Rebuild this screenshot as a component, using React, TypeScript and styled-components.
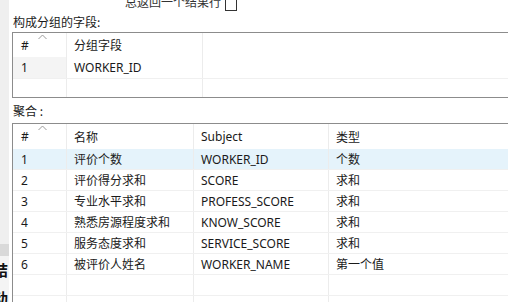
import React from "react";
import styled, { createGlobalStyle } from "styled-components";

const GlobalStyle = createGlobalStyle`
  html, body {
    margin: 0;
    padding: 0;
    background: #ffffff;
  }
  body {
    font-family: "Noto Sans", "Noto Sans CJK SC", sans-serif;
    font-size: 12px;
    color: #1a1a1a;
  }
`;

const Screen = styled.div`
  display: flex;
  width: 508px;
  height: 302px;
  overflow: hidden;
`;

const SideStrip = styled.div`
  width: 9px;
  flex-shrink: 0;
  background: #efefef;
  display: flex;
  flex-direction: column;
  overflow: hidden;
`;

const StripSpacer = styled.div`
  flex: 1;
`;

const StripBand = styled.div`
  height: 12px;
  flex-shrink: 0;
  background: #d9d9d9;
`;

const StripText = styled.div`
  height: 46px;
  flex-shrink: 0;
  background: #f4f4f4;
  font-family: "Noto Sans CJK SC", sans-serif;
  font-size: 15px;
  font-weight: bold;
  line-height: 28px;
  color: #111;
  margin-left: -7px;
  white-space: nowrap;
`;

const Main = styled.div`
  flex: 1;
  padding-left: 3px;
  display: flex;
  flex-direction: column;
  min-width: 0;
  overflow: hidden;
  & > * {
    flex-shrink: 0;
  }
`;

const TopOption = styled.div`
  height: 11px;
  overflow: hidden;
  padding-left: 113px;
  display: flex;
  align-items: flex-start;
  gap: 4px;
`;

const OptionText = styled.span`
  line-height: 12px;
  margin-top: -4px;
  font-family: "Noto Sans CJK SC", sans-serif;
  color: #333;
`;

const Check = styled.span`
  box-sizing: border-box;
  width: 12px;
  height: 12px;
  margin-top: -1px;
  flex-shrink: 0;
  border: 1px solid #333;
  background: #fff;
`;

const Label = styled.div<{ $h: number }>`
  height: ${(p) => p.$h}px;
  line-height: ${(p) => p.$h}px;
  padding-left: 1px;
  font-family: "Noto Sans CJK SC", sans-serif;
`;

const Table = styled.div`
  border-top: 1px solid #8c8c8c;
  border-bottom: 1px solid #8c8c8c;
  border-left: 1px solid #8c8c8c;
  display: flex;
  flex-direction: column;
  & > * {
    flex-shrink: 0;
  }
`;

const OpenTable = styled(Table)`
  border-bottom: none;
`;

const HeaderRow = styled.div<{ $h: number }>`
  display: flex;
  height: ${(p) => p.$h}px;
  position: relative;
`;

const Row = styled.div<{ $h: number; $selected?: boolean; $last?: boolean }>`
  display: flex;
  box-sizing: border-box;
  height: ${(p) => p.$h}px;
  border-bottom: ${(p) => (p.$last ? "none" : "1px solid #f0f0f0")};
  background: ${(p) => (p.$selected ? "#e5f3fb" : "transparent")};
`;

const Cell = styled.div<{ $w?: number; $shade?: boolean }>`
  ${(p) => (p.$w ? `width: ${p.$w}px; flex-shrink: 0;` : "flex: 1;")}
  box-sizing: border-box;
  border-right: ${(p) => (p.$w ? "1px solid #ececec" : "none")};
  padding-left: 7px;
  display: flex;
  align-items: center;
  white-space: nowrap;
  overflow: hidden;
  background: ${(p) => (p.$shade ? "#f4f4f4" : "transparent")};
`;

const NumCell = styled(Cell)`
  padding-left: 8px;
`;

const SortMark = styled.svg`
  position: absolute;
  left: 25px;
  top: 1px;
`;

const Sort = () => (
  <SortMark width="9" height="6" viewBox="0 0 9 6">
    <polyline points="0.5,5 4.5,1 8.5,5" fill="none" stroke="#9a9a9a" strokeWidth="1" />
  </SortMark>
);

const groupCols = [54, 136];
const aggCols = [54, 127, 135];

const aggRows = [
  ["1", "评价个数", "WORKER_ID", "个数"],
  ["2", "评价得分求和", "SCORE", "求和"],
  ["3", "专业水平求和", "PROFESS_SCORE", "求和"],
  ["4", "熟悉房源程度求和", "KNOW_SCORE", "求和"],
  ["5", "服务态度求和", "SERVICE_SCORE", "求和"],
  ["6", "被评价人姓名", "WORKER_NAME", "第一个值"],
  ["", "", "", ""],
  ["", "", "", ""],
];

export default function App() {
  return (
    <>
      <GlobalStyle />
      <Screen>
        <SideStrip>
          <StripSpacer />
          <StripBand />
          <StripText>
            结<br />动
          </StripText>
        </SideStrip>
        <Main>
          <TopOption>
            <OptionText>总返回一个结果行</OptionText>
            <Check />
          </TopOption>
          <Label $h={21}>构成分组的字段:</Label>
          <Table>
            <HeaderRow $h={24}>
              <Sort />
              <NumCell $w={groupCols[0]}>#</NumCell>
              <Cell $w={groupCols[1]}>分组字段</Cell>
              <Cell />
            </HeaderRow>
            <Row $h={22}>
              <NumCell $w={groupCols[0]} $shade>
                1
              </NumCell>
              <Cell $w={groupCols[1]}>WORKER_ID</Cell>
              <Cell />
            </Row>
            <Row $h={18} $last>
              <NumCell $w={groupCols[0]} />
              <Cell $w={groupCols[1]} />
              <Cell />
            </Row>
          </Table>
          <Label $h={25}>聚合 :</Label>
          <OpenTable>
            <HeaderRow $h={25}>
              <Sort />
              <NumCell $w={aggCols[0]}>#</NumCell>
              <Cell $w={aggCols[1]}>名称</Cell>
              <Cell $w={aggCols[2]}>Subject</Cell>
              <Cell>类型</Cell>
            </HeaderRow>
            {aggRows.map((r, i) => (
              <Row key={i} $h={21} $selected={i === 0}>
                <NumCell $w={aggCols[0]}>{r[0]}</NumCell>
                <Cell $w={aggCols[1]}>{r[1]}</Cell>
                <Cell $w={aggCols[2]}>{r[2]}</Cell>
                <Cell>{r[3]}</Cell>
              </Row>
            ))}
          </OpenTable>
        </Main>
      </Screen>
    </>
  );
}
